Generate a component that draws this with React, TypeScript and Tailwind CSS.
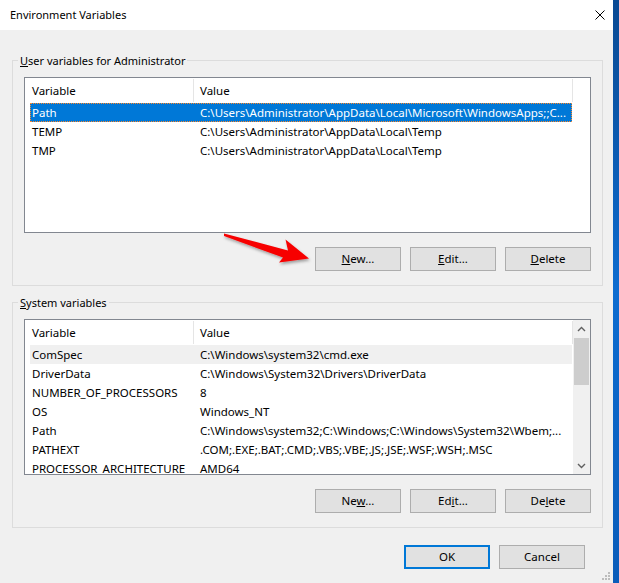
import React from "react";

type Row = { name: string; value: string };

const userRows: Row[] = [
  { name: "Path", value: "C:\\Users\\Administrator\\AppData\\Local\\Microsoft\\WindowsApps;;C..." },
  { name: "TEMP", value: "C:\\Users\\Administrator\\AppData\\Local\\Temp" },
  { name: "TMP", value: "C:\\Users\\Administrator\\AppData\\Local\\Temp" },
];

const systemRows: Row[] = [
  { name: "ComSpec", value: "C:\\Windows\\system32\\cmd.exe" },
  { name: "DriverData", value: "C:\\Windows\\System32\\Drivers\\DriverData" },
  { name: "NUMBER_OF_PROCESSORS", value: "8" },
  { name: "OS", value: "Windows_NT" },
  { name: "Path", value: "C:\\Windows\\system32;C:\\Windows;C:\\Windows\\System32\\Wbem;..." },
  { name: "PATHEXT", value: ".COM;.EXE;.BAT;.CMD;.VBS;.VBE;.JS;.JSE;.WSF;.WSH;.MSC" },
  { name: "PROCESSOR_ARCHITECTURE", value: "AMD64" },
];

function Button({
  children,
  primary = false,
}: {
  children: React.ReactNode;
  primary?: boolean;
}) {
  return (
    <div
      className={
        primary
          ? "flex h-[24px] w-[86px] items-center justify-center border-2 border-[#0078d7] bg-[#e1e1e1]"
          : "flex h-[24px] w-[86px] items-center justify-center border border-[#adadad] bg-[#e1e1e1]"
      }
    >
      <span>{children}</span>
    </div>
  );
}

function Chevron({ up }: { up: boolean }) {
  return (
    <svg width="9" height="6" viewBox="0 0 9 6" fill="none">
      <path
        d={up ? "M1 5 L4.5 1.5 L8 5" : "M1 1 L4.5 4.5 L8 1"}
        stroke="#606060"
        strokeWidth="1.4"
      />
    </svg>
  );
}

function ScrollBar() {
  return (
    <div className="flex w-[17px] flex-col bg-[#f0f0f0]">
      <div className="flex h-[17px] items-center justify-center">
        <Chevron up />
      </div>
      <div className="flex-1 px-[1px] pt-[1px]">
        <div className="h-[47px] bg-[#cdcdcd]" />
      </div>
      <div className="flex h-[17px] items-center justify-center">
        <Chevron up={false} />
      </div>
    </div>
  );
}

function ListView({
  rows,
  selected,
  hovered,
  scroll,
}: {
  rows: Row[];
  selected?: number;
  hovered?: number;
  scroll?: boolean;
}) {
  return (
    <div className="flex h-[156px] overflow-hidden border border-[#828790] bg-white">
      <div className="flex w-[548px] flex-col">
        <div className="flex h-[25px] shrink-0 items-center">
          <div className="w-[168px] pl-[7px]">Variable</div>
          <div className="h-[23px] w-[1px] bg-[#e5e5e5]" />
          <div className="w-[378px] pl-[6px]">Value</div>
          <div className="h-[23px] w-[1px] bg-[#e5e5e5]" />
        </div>
        {rows.map((r, i) => {
          const isSel = i === selected;
          const isHover = i === hovered;
          return (
            <div
              key={r.name + i}
              className={
                isSel
                  ? "ml-[5px] flex h-[19px] w-[542px] shrink-0 items-center border border-dotted border-[#ff8728] bg-[#0078d7] text-white"
                  : isHover
                  ? "ml-[5px] flex h-[19px] w-[542px] shrink-0 items-center border border-transparent bg-[#f0f0f0]"
                  : "ml-[5px] flex h-[19px] w-[542px] shrink-0 items-center border border-transparent"
              }
            >
              <div className="w-[169px] shrink-0 whitespace-nowrap pl-[1px]">{r.name}</div>
              <div className="whitespace-nowrap">{r.value}</div>
            </div>
          );
        })}
      </div>
      <div className="flex-1" />
      {scroll && <ScrollBar />}
    </div>
  );
}

function GroupBox({
  label,
  children,
  className,
}: {
  label: React.ReactNode;
  children: React.ReactNode;
  className: string;
}) {
  return (
    <div className={"relative border border-[#dcdcdc] px-[11px] pb-[14px] pt-[16px] " + className}>
      <span className="absolute left-[5px] top-[-7px] bg-[#f0f0f0] px-[2px] text-[11px] leading-[14px]">
        {label}
      </span>
      {children}
    </div>
  );
}

export default function App() {
  return (
    <div className="relative flex h-[583px] w-[619px] overflow-hidden font-['Segoe_UI','Noto_Sans',sans-serif] text-[11.5px] leading-[16px] text-black">
      <div className="relative flex h-full w-[613px] flex-col bg-[#f0f0f0]">
        {/* title bar */}
        <div className="flex h-[30px] shrink-0 items-center justify-between bg-white pl-[10px] pr-[8px]">
          <span className="text-[11px]">Environment Variables</span>
          <svg width="10" height="10" viewBox="0 0 10 10">
            <path d="M0.5 0.5 L9.5 9.5 M9.5 0.5 L0.5 9.5" stroke="#000" strokeWidth="1" />
          </svg>
        </div>

        <div className="flex flex-col pl-[12px] pr-[10px]">
          <GroupBox
            className="mt-[30px]"
            label={
              <>
                <u>U</u>ser variables for Administrator
              </>
            }
          >
            <ListView rows={userRows} selected={0} />
            <div className="mt-[14px] flex justify-end gap-[9px]">
              <Button>
                <u>N</u>ew...
              </Button>
              <Button>
                <u>E</u>dit...
              </Button>
              <Button>
                <u>D</u>elete
              </Button>
            </div>
          </GroupBox>

          <GroupBox
            className="mt-[16px]"
            label={
              <>
                <u>S</u>ystem variables
              </>
            }
          >
            <ListView rows={systemRows} hovered={0} scroll />
            <div className="mt-[14px] flex justify-end gap-[9px]">
              <Button>
                Ne<u>w</u>...
              </Button>
              <Button>
                Ed<u>i</u>t...
              </Button>
              <Button>
                De<u>l</u>ete
              </Button>
            </div>
          </GroupBox>
        </div>

        <div className="mt-[17px] flex justify-end gap-[9px] pr-[28px]">
          <Button primary>OK</Button>
          <Button>Cancel</Button>
        </div>

        {/* size grip */}
        <svg className="absolute bottom-[2px] right-[2px]" width="9" height="9" viewBox="0 0 9 9">
          <rect x="6" y="0" width="2" height="2" fill="#bcbcbc" />
          <rect x="3" y="3" width="2" height="2" fill="#bcbcbc" />
          <rect x="6" y="3" width="2" height="2" fill="#bcbcbc" />
          <rect x="0" y="6" width="2" height="2" fill="#bcbcbc" />
          <rect x="3" y="6" width="2" height="2" fill="#bcbcbc" />
          <rect x="6" y="6" width="2" height="2" fill="#bcbcbc" />
        </svg>
      </div>

      {/* desktop edge */}
      <div className="h-full w-[6px] bg-gradient-to-b from-[#0a4a93] via-[#0d6cd0] to-[#0a5cb9]" />

      {/* red callout arrow */}
      <svg
        className="pointer-events-none absolute left-0 top-0"
        width="619"
        height="583"
        viewBox="0 0 619 583"
      >
        <defs>
          <filter id="arrowShadow" x="-20%" y="-40%" width="140%" height="180%">
            <feDropShadow dx="1" dy="2" stdDeviation="1.6" floodColor="#000" floodOpacity="0.35" />
          </filter>
        </defs>
        <polygon
          points="224,233.5 288,250.5 285.5,239.5 309,258.5 279,262.5 283,257.5 224,236"
          fill="#f70000"
          filter="url(#arrowShadow)"
        />
      </svg>
    </div>
  );
}
